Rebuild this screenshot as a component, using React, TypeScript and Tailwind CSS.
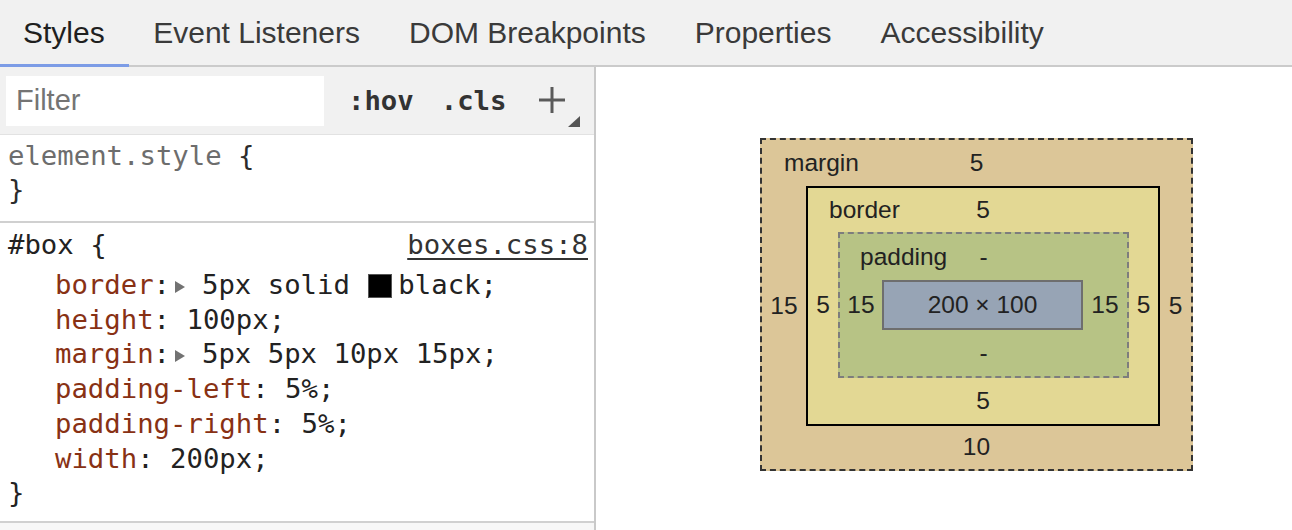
import type { ReactNode } from 'react'

const tabs = ['Styles', 'Event Listeners', 'DOM Breakpoints', 'Properties', 'Accessibility']

function Expander() {
    return (
        <span className="inline-block w-0 h-0 ml-[4.5px] mr-[1px] border-y-[6px] border-y-transparent border-l-[10px] border-l-[#727272] align-[1px]" />
    )
}

function Swatch() {
    return <span className="inline-block w-[24px] h-[24px] ml-[2px] mr-[6px] bg-black border border-[#555] align-[-4px]" />
}

interface Rule {
    name: string
    expand?: boolean
    value: ReactNode
}

const rules: Rule[] = [
    { name: 'border', expand: true, value: <>5px solid <Swatch />black</> },
    { name: 'height', value: '100px' },
    { name: 'margin', expand: true, value: '5px 5px 10px 15px' },
    { name: 'padding-left', value: '5%' },
    { name: 'padding-right', value: '5%' },
    { name: 'width', value: '200px' },
]

function BoxModel() {
    return (
        <div className="w-[433px] h-[333px] border-2 border-dashed border-[#333] bg-[#dcc698] flex flex-col text-[24.5px] text-[#222] font-['Liberation_Sans',Arial,sans-serif]">
            <div className="h-[46px] grid grid-cols-[1fr_auto_1fr] items-center px-[22px]">
                <span className="justify-self-start">margin</span>
                <span>5</span>
                <span />
            </div>
            <div className="flex">
                <div className="w-[44px] flex items-center justify-center">15</div>
                <div className="w-[354px] h-[240px] border-2 border-black bg-[#e3d894] flex flex-col">
                    <div className="h-[44px] grid grid-cols-[1fr_auto_1fr] items-center px-[21px]">
                        <span className="justify-self-start">border</span>
                        <span>5</span>
                        <span />
                    </div>
                    <div className="flex">
                        <div className="w-[30px] flex items-center justify-center">5</div>
                        <div className="w-[291px] h-[146px] border-2 border-dashed border-[#7d7d7d] bg-[#b7c385] flex flex-col">
                            <div className="h-[46px] grid grid-cols-[1fr_auto_1fr] items-center px-[20px]">
                                <span className="justify-self-start">padding</span>
                                <span>-</span>
                                <span />
                            </div>
                            <div className="flex">
                                <div className="w-[42px] flex items-center justify-center">15</div>
                                <div className="w-[201px] h-[50px] border-2 border-[#6e6e6e] bg-[#97a4b5] flex items-center justify-center">
                                    200 × 100
                                </div>
                                <div className="flex-1 flex items-center justify-center">15</div>
                            </div>
                            <div className="flex-1 flex items-center justify-center">-</div>
                        </div>
                        <div className="flex-1 flex items-center justify-center">5</div>
                    </div>
                    <div className="flex-1 flex items-center justify-center">5</div>
                </div>
                <div className="flex-1 flex items-center justify-center">5</div>
            </div>
            <div className="flex-1 flex items-center justify-center">10</div>
        </div>
    )
}

export default function App() {
    return (
        <div className="w-[1292px] h-[530px] overflow-hidden bg-white flex flex-col font-['Liberation_Sans',Arial,sans-serif]">
            {/* Tab strip */}
            <div className="h-[67px] flex-none flex bg-[#f1f1f1] border-b-2 border-[#cbcbcb]">
                {tabs.map((tab, index) => (
                    <div
                        key={tab}
                        className={
                            index === 0
                                ? 'h-[67px] flex items-center pl-[23px] pr-[24px] pt-[1px] border-b-[3px] border-[#7c9ce6] text-[30px] text-[#1f1f1f]'
                                : 'h-[67px] flex items-center px-[24.5px] pt-[1px] border-b-[3px] border-transparent text-[30px] text-[#3a3a3a]'
                        }
                    >
                        {tab}
                    </div>
                ))}
            </div>

            <div className="flex-1 flex min-h-0">
                {/* Styles pane */}
                <div className="w-[596px] flex-none flex flex-col bg-[#f7f7f7] border-r-2 border-[#c9c9c9]">
                    <div className="h-[68px] flex-none flex items-start bg-[#f1f1f1] border-b border-[#e2e2e2]">
                        <div className="mt-[9px] ml-[6px] w-[318px] h-[50px] bg-white flex items-center pl-[10px] text-[29px] text-[#747474]">
                            Filter
                        </div>
                        <div className="mt-[15px] ml-[24px] flex items-center h-[38px] text-[27.3px] font-bold text-[#333] font-['DejaVu_Sans_Mono',monospace]">
                            <span>:hov</span>
                            <span className="ml-[27px]">.cls</span>
                        </div>
                        <svg width="42" height="42" viewBox="0 0 42 42" className="ml-[32px] mt-[19px]">
                            <line x1="0" y1="14" x2="26" y2="14" stroke="#5a5a5a" strokeWidth="3" />
                            <line x1="13" y1="1" x2="13" y2="27" stroke="#5a5a5a" strokeWidth="3" />
                            <polygon points="41,30 41,41 29,41" fill="#555" />
                        </svg>
                    </div>

                    <div className="bg-white pl-[8px] pt-[4px] pb-[14px] leading-[34px] text-[27.3px] font-['DejaVu_Sans_Mono',monospace] border-b-2 border-[#d0d0d0]">
                        <div>
                            <span className="text-[#6d6d6d]">element.style</span> <span className="text-[#2b2b2b]">{'{'}</span>
                        </div>
                        <div className="text-[#2b2b2b]">{'}'}</div>
                    </div>

                    <div className="bg-white pl-[8px] pr-[6px] pt-[5px] pb-[10px] text-[27.3px] text-[#222] font-['DejaVu_Sans_Mono',monospace] border-b-2 border-[#d0d0d0]">
                        <div className="flex justify-between leading-[34px]">
                            <span>#box {'{'}</span>
                            <span className="underline underline-offset-[4px] text-[#333]">boxes.css:8</span>
                        </div>
                        <div className="mt-[6px] leading-[34.7px]">
                            {rules.map((rule) => (
                                <div key={rule.name} className="pl-[47px] whitespace-pre">
                                    <span className="text-[#883114]">{rule.name}</span>
                                    <span>:</span>
                                    {rule.expand ? <Expander /> : null}
                                    <span> {rule.value};</span>
                                </div>
                            ))}
                            <div>{'}'}</div>
                        </div>
                    </div>
                </div>

                {/* Box model pane */}
                <div className="flex-1 bg-white pl-[164px] pt-[71px]">
                    <BoxModel />
                </div>
            </div>
        </div>
    )
}
